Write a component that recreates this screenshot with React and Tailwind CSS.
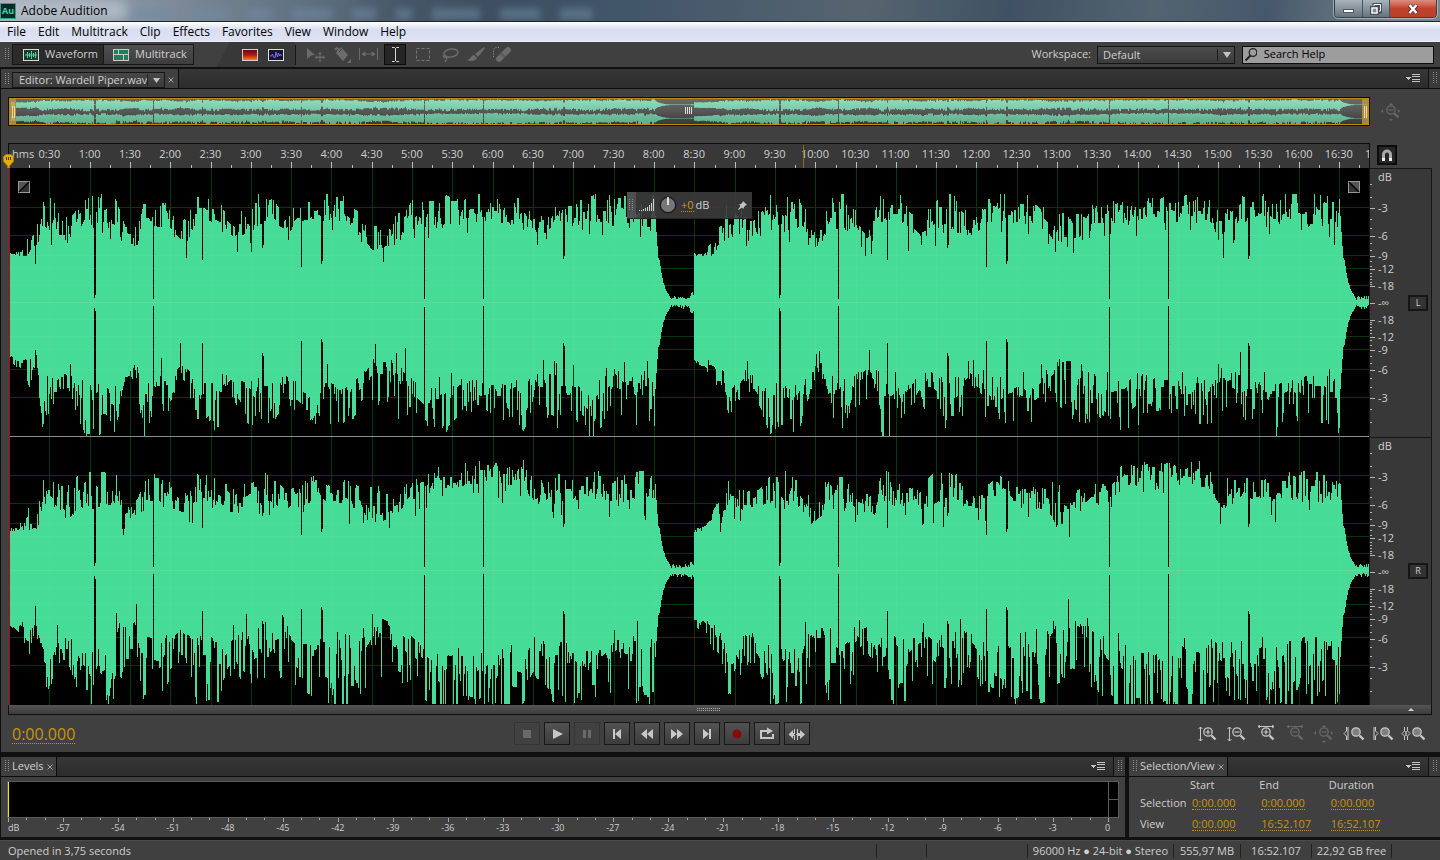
import React from 'react';

const SONG = 685;
const VIEW_W = 1360;
const VIEW_H = 537;
const SECONDS = 1012.107;
const STEP = (30 / SECONDS) * 100;

// x, then [low, high] peaks for: left up, left down, right up, right down
const ENVELOPE = [
  [0, 46, 49, 54, 58, 38, 41, 50, 54],
  [10, 46, 51, 58, 66, 40, 45, 52, 62],
  [20, 48, 68, 62, 84, 42, 66, 58, 80],
  [28, 52, 78, 66, 84, 44, 68, 62, 90],
  [33, 78, 98, 98, 125, 66, 88, 88, 130],
  [40, 68, 104, 88, 108, 68, 90, 94, 114],
  [50, 62, 85, 74, 88, 58, 82, 70, 96],
  [60, 62, 86, 76, 94, 54, 82, 72, 96],
  [68, 70, 96, 90, 110, 64, 90, 84, 120],
  [76, 84, 105, 92, 136, 66, 102, 94, 136],
  [95, 76, 106, 88, 130, 64, 100, 88, 134],
  [104, 78, 106, 94, 130, 68, 98, 88, 134],
  [111, 68, 92, 80, 108, 56, 88, 64, 118],
  [116, 50, 78, 62, 84, 46, 76, 60, 86],
  [128, 54, 72, 64, 82, 56, 78, 58, 88],
  [134, 80, 102, 90, 132, 70, 94, 80, 132],
  [150, 74, 106, 82, 118, 72, 96, 82, 130],
  [160, 72, 90, 80, 104, 64, 86, 70, 106],
  [172, 60, 80, 68, 94, 60, 76, 62, 92],
  [180, 64, 86, 76, 104, 58, 80, 66, 96],
  [186, 82, 104, 94, 136, 70, 98, 82, 136],
  [200, 84, 104, 86, 124, 72, 92, 78, 128],
  [212, 78, 104, 88, 118, 64, 88, 80, 124],
  [225, 66, 84, 74, 96, 60, 78, 68, 96],
  [235, 68, 94, 78, 114, 60, 90, 70, 110],
  [245, 74, 106, 86, 124, 66, 98, 82, 126],
  [260, 72, 104, 86, 124, 66, 94, 78, 120],
  [275, 68, 86, 74, 100, 62, 80, 68, 108],
  [290, 78, 100, 86, 110, 64, 82, 80, 116],
  [305, 84, 106, 92, 118, 72, 94, 82, 122],
  [320, 80, 104, 86, 118, 70, 86, 76, 130],
  [335, 78, 104, 92, 118, 68, 92, 74, 128],
  [350, 68, 92, 80, 110, 62, 82, 80, 126],
  [362, 52, 84, 64, 98, 48, 84, 58, 120],
  [378, 60, 88, 68, 112, 52, 76, 60, 104],
  [392, 58, 86, 72, 116, 58, 82, 66, 112],
  [402, 82, 104, 82, 108, 66, 90, 74, 116],
  [414, 78, 102, 94, 118, 70, 90, 86, 136],
  [430, 76, 104, 92, 132, 86, 108, 98, 150],
  [450, 86, 104, 78, 112, 84, 106, 96, 150],
  [470, 86, 107, 84, 108, 86, 110, 92, 150],
  [500, 80, 104, 86, 116, 86, 109, 86, 136],
  [514, 80, 100, 92, 124, 86, 108, 92, 138],
  [524, 70, 90, 78, 104, 66, 90, 76, 116],
  [536, 64, 92, 76, 112, 66, 88, 82, 122],
  [548, 84, 104, 84, 122, 70, 94, 84, 136],
  [565, 80, 106, 86, 112, 72, 92, 82, 126],
  [580, 82, 104, 94, 136, 72, 96, 88, 136],
  [600, 80, 106, 80, 112, 72, 96, 80, 126],
  [620, 78, 106, 84, 124, 70, 96, 80, 132],
  [644, 78, 104, 84, 126, 72, 96, 80, 130],
];

// x, width, remaining peak (upwards, downwards)
const DROPS = [
  [85, 2, 4, 5],
  [144, 1, 3, 3],
  [193, 1, 42, 40],
  [253, 2, 54, 50],
  [292, 1, 35, 38],
  [312, 2, 38, 36],
  [415, 1, 3, 4],
  [474, 1, 3, 3],
  [554, 2, 43, 40],
];

const noise = (seed) => {
  let s = seed;
  return () => {
    s = (s * 1664525 + 1013904223) % 4294967296;
    return s / 4294967296;
  };
};

const peakAt = (x, col, r) => {
  let i = 0;
  while (i < ENVELOPE.length - 2 && ENVELOPE[i + 1][0] <= x) i++;
  const a = ENVELOPE[i];
  const b = ENVELOPE[i + 1];
  const t = Math.min(1, (x - a[0]) / (b[0] - a[0]));
  const lo = a[col] + (b[col] - a[col]) * t;
  const hi = a[col + 1] + (b[col + 1] - a[col + 1]) * t;
  return lo + (hi - lo) * r;
};

const tail = (x, r) => {
  const fade = [86, 70, 56, 44, 42, 36, 29, 24, 19, 17, 13, 11, 9, 8, 6, 4];
  const i = x - 646;
  if (i < fade.length) return fade[i];
  return x > 680 ? 4 + r * 6 : 2 + r * 4;
};

const sidePeaks = (col, seed, limit) => {
  const rand = noise(seed);
  const up = col === 1 || col === 5;
  const out = [];
  let held = 0;
  for (let px = 0; px < VIEW_W; px++) {
    const x = px % SONG;
    const r = rand();
    const kind = rand();
    // mostly a flat body, with single tall columns standing out of it
    if (kind > 0.3) held = kind > 0.72 ? 0.5 + r * 0.65 : r * 0.65 - (up ? 0.15 : 0.3);
    const drop = DROPS.find((d) => x >= d[0] && x < d[0] + d[1]);
    let v = x >= 646 ? tail(x, r) : peakAt(x, col, held);
    if (x > 20 && x < 646 && rand() < 0.1) v -= 6 + rand() * 18;
    if (drop) v = (up ? drop[2] : drop[3]) + (x - drop[0]) * 3;
    out.push(Math.round(Math.min(v, limit)));
  }
  return out;
};

const channelPath = (center, up, down) => {
  let d = `M0 ${center}`;
  up.forEach((v, x) => { d += `V${center - v}H${x + 1}`; });
  for (let x = VIEW_W - 1; x >= 0; x--) d += `V${center + 1 + down[x]}H${x}`;
  return d + 'Z';
};

const LEFT_PATH = channelPath(134, sidePeaks(1, 7, 108), sidePeaks(3, 91, 133));
const RIGHT_PATH = channelPath(402, sidePeaks(5, 23, 110), sidePeaks(7, 57, 133));

const H_LINES = [-95, -67, -47, -34, -17, 17, 34, 47, 67, 95];
const V_LINES = Array.from({ length: 33 }, (_, i) => Math.round(((i + 1) * 30 * VIEW_W) / SECONDS));

const clock = (n) => `${Math.floor(n / 2)}:${n % 2 ? '30' : '00'}`;

const DB_SCALE = [
  ['dB', 31], ['-3', 28], ['-6', 20], ['-9', 13], ['-12', 17], ['-18', 17], ['-∞', 17],
  ['-18', 17], ['-12', 13], ['-9', 20], ['-6', 28], ['-3', 45],
];
const MINOR_TICKS = [15, 28, 50, 59, 74, 81, 92, 97, 104, 107, 110, 113, 115];

const Grip = ({ className = '' }) => (
  <svg className={`shrink-0 ${className}`} width="5" height="13" shapeRendering="crispEdges" aria-hidden="true">
    {[0, 2, 4, 6, 8, 10].map((y) => (
      <g key={y} fill="#8c8c8c">
        <rect x="0" y={y} width="1" height="1" />
        <rect x="3" y={y} width="1" height="1" />
      </g>
    ))}
  </svg>
);

const CloseTab = ({ label }) => (
  <button aria-label={`Close ${label}`} className="flex h-4 w-3 items-center justify-center text-[#a5a5a5]">
    <svg width="6" height="6" stroke="currentColor" strokeWidth="1"><path d="M0.5 0.5l5 5M5.5 0.5l-5 5" /></svg>
  </button>
);

const PanelEnd = () => (
  <div className="ml-auto flex items-center">
    <button aria-label="Panel menu" className="mr-[6px] flex h-4 w-4 items-center">
      <svg width="15" height="9" fill="#c4c4c4" shapeRendering="crispEdges">
        <path d="M0 3h5L2.5 6z" />
        <path d="M6 0h8v1H6zM6 2h8v1H6zM6 5h8v1H6zM6 7h8v1H6z" />
      </svg>
    </button>
    <div className="flex h-[19px] w-3 items-center justify-center border-l border-[#111] bg-[#3a3a3a]"><Grip className="ml-px" /></div>
  </div>
);

const Strip = ({ children }) => (
  <div className="flex h-5 shrink-0 items-stretch border-b border-[#0c0c0c] bg-linear-to-b from-[#373737] to-[#2c2c2c]">{children}<PanelEnd /></div>
);

const WinButton = ({ label, className, children }) => (
  <button aria-label={label} className={`flex items-center justify-center ${className}`}>{children}</button>
);

const TitleBar = () => (
  <header className="relative flex h-[22px] shrink-0 items-start overflow-hidden border-b border-[#1c232b] bg-linear-to-r from-[#a4b0bb] via-[#4b5c6d] via-28% to-[#6d7983]">
    <div className="absolute inset-0 bg-linear-[100deg,transparent_24%,#3d4f60_34%,#42566a_44%,#56646f_60%,#3f5263_70%,#536370_80%,#45586b_88%,#7a848c_97%]" />
    <div className="absolute top-2 left-32 flex gap-5 blur-[3px]">
      {['w-11', 'w-9', 'w-6', 'w-10', 'w-6', 'w-4', 'w-12', 'w-10', 'w-8'].map((w, i) => (
        <span key={i} className={`h-3 bg-[#6f8ba5]/50 ${w}`} />
      ))}
    </div>
    <div className="absolute top-0 left-0 h-5 w-32 rounded-full bg-[#b9c2ca]/80 blur-[6px]" />
    <div className="relative mt-1 ml-px flex h-[14px] w-[14px] items-center justify-center bg-[#062a26] text-[9px] font-bold text-[#36d6b0] outline outline-[#2ba58c]">Au</div>
    <h1 className="relative ml-[6px] pt-[3px] text-[12px] leading-4 text-black">Adobe Audition</h1>
    <div className="relative mr-[3px] ml-auto flex h-[18px] overflow-hidden rounded-b-[4px] border border-t-0 border-[#333e49] outline outline-white/40">
      <WinButton label="Minimize" className="w-7 border-r border-[#46525e] bg-linear-to-b from-[#a9b3bb] to-[#66747f]">
        <span className="mt-1 h-1 w-[11px] border border-[#555] bg-white" />
      </WinButton>
      <WinButton label="Restore" className="w-[27px] border-r border-[#46525e] bg-linear-to-b from-[#a9b3bb] to-[#66747f]">
        <svg width="12" height="12" fill="none"><path d="M4 4V1.5h6.5V9H9" stroke="#444f59" strokeWidth="3" /><path d="M4 3V1.5h6.5V8H9" stroke="#fff" /><rect x="1.5" y="4.5" width="6" height="6" stroke="#444f59" strokeWidth="3" /><rect x="2" y="5" width="5" height="5" stroke="#fff" strokeWidth="1.5" /></svg>
      </WinButton>
      <WinButton label="Close" className="w-[46px] bg-linear-to-b from-[#d98d7e] via-[#c3412b] to-[#b5412b]">
        <svg width="12" height="10"><path d="M2 1l8 8M10 1L2 9" stroke="#55302c" strokeWidth="4" /><path d="M2.500 1l7 8M9.500 1l-7 8" stroke="#fff" strokeWidth="2.500" /></svg>
      </WinButton>
    </div>
  </header>
);

const MENUS = ['File', 'Edit', 'Multitrack', 'Clip', 'Effects', 'Favorites', 'View', 'Window', 'Help'];

const MenuBar = () => (
  <nav className="flex h-5 shrink-0 items-center gap-3 border-b border-[#f0f0f8] bg-linear-to-b from-white via-[#d8def0] via-40% to-[#dfe3f4] px-[7px] text-[12px] leading-4 text-black">
    {MENUS.map((m) => <button key={m}>{m}</button>)}
  </nav>
);

const TOOLS = [
  ['Move', 'w-[26px]', <svg width="19" height="14" fill="#6b6b6b"><path d="M0 0l8 7-4 .5L0 11z" /><path d="M13 4l2 2h-1.500v2.500H16V7l2 2.500-2 2V10h-2.500v2.500H15L13 14l-2-1.500h1.500V10H10v1.500L8 9.500 10 7v1.500h2.500V6H11z" /></svg>],
  ['Razor', 'w-[26px]', <svg width="19" height="18" fill="#6b6b6b"><path d="M4 1l3 2 1-2 7 8-5 6-7-8 1-2-3-2z" /><path d="M6 6l3-3M5 3l-3 3" stroke="#404040" /><path d="M18 13v4h-4z" /></svg>],
  ['Slip', 'w-[26px]', <svg width="19" height="13" stroke="#6b6b6b" fill="#6b6b6b"><path d="M.5 0v12M18.500 0v12M3 6h13" /><path d="M3 6l3-2v4zM16 6l-3-2v4z" /></svg>],
  ['Time selection', 'w-[28px]', null],
  ['Marquee', 'w-[28px]', <svg width="15" height="13" fill="none" stroke="#777"><rect x=".5" y=".5" width="13" height="12" strokeDasharray="3 2" /></svg>],
  ['Lasso', 'w-[26px]', <svg width="18" height="14" fill="none" stroke="#6b6b6b" strokeWidth="1.500"><ellipse cx="10" cy="5" rx="7" ry="4" transform="rotate(-8 10 5)" /><path d="M4 7c-3 1-1 3 1 2s0 3-1 5" /></svg>],
  ['Brush', 'w-[26px]', <svg width="18" height="15" fill="#6b6b6b"><path d="M17 0L8 7l3 3 7-9z" /><path d="M7 8c-3 0-3 4-7 5 4 2 9 1 10-2z" /></svg>],
  ['Healing', 'w-[26px]', <svg width="20" height="17"><path d="M7 13L16 4" stroke="#6b6b6b" strokeWidth="6" strokeLinecap="round" /><path d="M9 8l4 3" stroke="#505050" strokeDasharray="1 1" strokeWidth="3" /><path d="M7 1.500H4C1.500 2 1.500 4 1.500 7v5" fill="none" stroke="#999" strokeDasharray="1 1.500" /></svg>],
];

const Toolbar = () => (
  <div className="flex h-[27px] shrink-0 items-center border-b-2 border-[#101010] bg-[#404040] pr-[6px] pl-[5px] text-[11px]">
    <Grip />
    <div className="ml-[2px] flex h-[21px] w-[182px] border border-[#161616]">
      <button className="flex flex-1 items-center gap-[6px] border-r border-[#161616] bg-[#2b2b2b] pl-[10px]">
        <svg width="16" height="12" fill="none" stroke="#d8d8d8"><rect x=".5" y=".5" width="15" height="11" fill="#203a30" /><path d="M2 6h12M4.500 3v6M6.500 4v4M8.500 2v8M10.500 4v4M12.500 3v6" stroke="#4ed39b" /></svg>
        Waveform
      </button>
      <button className="flex flex-1 items-center gap-[6px] bg-linear-to-b from-[#505050] to-[#3d3d3d] pl-[9px]">
        <svg width="16" height="12"><rect width="16" height="12" fill="#c9c9c9" /><path d="M1 1h4v4H1zM6 1h9v4H6zM1 6h9v5H1zM11 6h4v5h-4z" fill="#1f7f58" /></svg>
        Multitrack
      </button>
    </div>
    <div className="h-full w-[48px] bg-linear-[118deg,#404040_58%,#383838_59%]" />
    <div className="flex h-full items-center gap-[10px] bg-[#383838] pr-[11px]">
      <button aria-label="Spectral frequency display">
        <svg width="16" height="12"><defs><linearGradient id="heat" x2="0" y2="1"><stop offset="0" stopColor="#5a0a14" /><stop offset=".5" stopColor="#b81616" /><stop offset="1" stopColor="#ff8a1c" /></linearGradient></defs><rect x=".5" y=".5" width="15" height="11" fill="url(#heat)" stroke="#dcc" /></svg>
      </button>
      <button aria-label="Spectral pitch display">
        <svg width="16" height="12" fill="none"><rect x=".5" y=".5" width="15" height="11" fill="#14142c" stroke="#ddd" /><path d="M2 7h1.500l1-2 1 3 1.500 1 1-6 1.500 5 1-4 1 3 1-2 1 2" stroke="#7a72ff" /></svg>
      </button>
    </div>
    <div className="h-5 w-2 border-l border-[#161616]" />
    {TOOLS.map(([name, w, icon]) => (
      <div key={name} className={`flex justify-center ${w}`}>
        {icon ? <button aria-label={name}>{icon}</button> : (
          <button aria-label={name} className="flex h-[21px] w-[22px] items-center justify-center border border-[#0c0c0c] bg-[#262626]">
            <svg width="9" height="15" fill="none" stroke="#d5d5d5"><path d="M1 .5h2.500l1 1 1-1H8M4.500 1v13M1 14.500h2.500l1-1 1 1H8" /></svg>
          </button>
        )}
      </div>
    ))}
    <label htmlFor="workspace" className="ml-auto">Workspace:</label>
    <div className="relative ml-[6px]">
      <select id="workspace" className="block h-[18px] w-[138px] appearance-none border border-[#141414] bg-linear-to-b from-[#4c4c4c] to-[#3c3c3c] pl-[5px] text-[11px] leading-4">
        <option>Default</option>
      </select>
      <span className="pointer-events-none absolute top-[3px] right-0 flex h-3 w-[18px] items-center justify-center border-l border-[#1c1c1c]">
        <svg width="8" height="6" fill="#c4c4c4"><path d="M0 0h8L4 6z" /></svg>
      </span>
    </div>
    <label className="ml-[7px] flex h-[18px] w-[192px] items-center border border-[#0c0c0c] bg-[#9d9d9d] pl-[2px]">
      <svg width="13" height="13" fill="none" stroke="#222" strokeWidth="1.300"><circle cx="8" cy="4.500" r="3.800" /><path d="M5.500 7.500L.5 12.500" strokeWidth="2" /></svg>
      <input aria-label="Search Help" placeholder="Search Help" className="ml-[7px] w-full bg-transparent text-[11px] text-black outline-none placeholder:text-black" />
    </label>
  </div>
);

const Overview = () => (
  <div className="flex h-[29px] shrink-0">
    <div className="relative min-w-0 flex-1 border border-[#0c0c0c]">
      <svg className="block h-full w-full bg-linear-to-b from-[#6c6c6c] via-[#565656] to-[#363636]" viewBox={`0 0 ${VIEW_W} ${VIEW_H}`} preserveAspectRatio="none">
        <defs><linearGradient id="mini" gradientUnits="userSpaceOnUse" x1="0" x2="0" y1="0" y2={VIEW_H}><stop offset="0" stopColor="#92e0bf" /><stop offset="1" stopColor="#5bab8a" /></linearGradient></defs>
        <path d={LEFT_PATH + RIGHT_PATH} fill="url(#mini)" />
      </svg>
      <div className="absolute inset-0 flex items-center justify-between border border-[#c08a12]">
        {[0, 1].map((i) => (
          <span key={i} className="flex h-full w-[6px] items-center justify-center gap-px border border-[#c08a12] bg-[#b8a466]/70">
            <i className="h-3 w-px bg-[#e8dcae]" /><i className="h-3 w-px bg-[#e8dcae]" />
          </span>
        ))}
      </div>
      <svg className="absolute top-[9px] left-1/2 -ml-1" width="8" height="8" fill="#ddd" shapeRendering="crispEdges"><path d="M0 0h1v7H0zM2 0h1v7H2zM4 0h1v7H4zM6 0h1v7H6z" /></svg>
    </div>
    <div className="flex w-[62px] items-center pl-[11px]"><ZoomIcon kind="full" dim /></div>
  </div>
);

const Lens = ({ x = 0, sign }) => (
  <g transform={`translate(${x} 0)`}>
    <circle cx="6" cy="7" r="4.200" fill={sign ? 'none' : '#808080'} stroke="currentColor" strokeWidth="1.300" />
    <path d="M9.500 10.500l4 4" stroke="currentColor" strokeWidth="2.400" />
    {sign && <path d={sign === '+' ? 'M3.500 7h5M6 4.500v5' : 'M3.500 7h5'} stroke="currentColor" strokeWidth="1.200" />}
  </g>
);

const ZoomIcon = ({ kind, dim }) => (
  <svg width="24" height="18" fill="none" className={dim ? 'text-[#686868]' : 'text-[#c6c6c6]'}>
    {(kind === 'v+' || kind === 'v-') && <><path d="M2.500 2v14M.5 4l2-2 2 2M.5 14l2 2 2-2" stroke="currentColor" /><Lens x={4} sign={kind[1]} /></>}
    {(kind === 'h+' || kind === 'h-') && <><path d="M2 1.500h16M4 0L2 1.500 4 3M16 0l2 1.500L16 3" stroke="currentColor" /><Lens x={4} sign={kind[1]} /></>}
    {kind === 'full' && <><Lens x={4} sign="-" /><path d="M8 2l2-2 2 2zM8 16l2 2 2-2zM2 6L0 8l2 2zM17 6l2 2-2 2z" fill="currentColor" /></>}
    {kind === 'in' && <><path d="M3.500 2v4L1 8.500 3.500 11v4" stroke="currentColor" /><path d="M4 2h2v13H4z" fill="#888" /><Lens x={7} /></>}
    {kind === 'out' && <><path d="M1 2h2v13H1z" fill="#888" /><path d="M3.500 2v4l2.500 2.500L3.500 11v4" stroke="currentColor" /><Lens x={7} /></>}
    {kind === 'sel' && <><path d="M3.500 2v4L1 8.500 3.500 11v4M6.500 2v4L9 8.500 6.500 11v4" stroke="currentColor" /><path d="M4 6h2v5H4z" fill="#999" /><Lens x={10} /></>}
  </svg>
);

const Ruler = () => (
  <div className="flex h-[25px] shrink-0">
    <div className="relative min-w-0 flex-1">
      <div className="flex h-full flex-col overflow-hidden border border-b-0 border-[#0c0c0c] bg-[#383838]">
        <div className="flex pt-[2px] text-[11px] leading-4 whitespace-nowrap">
          <span className="shrink-0 pl-[3px]" style={{ width: `${STEP / 2}%` }}>hms</span>
          {Array.from({ length: 34 }, (_, i) => (
            <span key={i} className="shrink-0 text-center" style={{ width: `${STEP}%` }}>{clock(i + 1)}</span>
          ))}
        </div>
        <svg className="mt-auto block h-[7px] w-full overflow-visible" viewBox={`0 0 ${VIEW_W} 7`} preserveAspectRatio="none" fill="#bdbdbd" shapeRendering="crispEdges">
          {V_LINES.map((x) => <path key={x} d={`M${x} 0h1v7h-1zM${x - 20} 3h1v4h-1z`} />)}
          <rect x="1350" y="3" width="1" height="4" />
          <rect x="794" y="-17" width="1" height="24" fill="#8a6a1c" />
        </svg>
      </div>
      <svg className="absolute bottom-0 -left-[5px] z-10" width="12" height="14"><path d="M.5 2.500L3 .5h5l2.500 2v5L6.500 12v2h-2v-2L.5 7.500z" fill="#e6ad0c" stroke="#a87a08" /><path d="M3.500 3v3M5.500 3v3M7.500 3v3" stroke="#4a3708" /></svg>
    </div>
    <div className="w-[62px] pt-[2px] pl-[7px]">
      <button aria-label="Toggle snapping" className="flex h-5 w-5 items-center justify-center border-2 border-[#0c0c0c] bg-[#262626]">
        <svg width="12" height="12" fill="none"><path d="M2.500 11V5.500a3.500 3.500 0 017 0V11" stroke="#a8a8a8" strokeWidth="3" /><path d="M1 9h3v3H1zM8 9h3v3H8z" fill="#f0f0f0" /></svg>
      </button>
    </div>
  </div>
);

const Channel = ({ name }) => (
  <div className="flex min-h-0 flex-1 border-t border-[#161616] bg-[#383838]">
    <svg className="block h-full w-2" viewBox="0 0 8 268" preserveAspectRatio="none" fill="#b5b5b5" shapeRendering="crispEdges">
      {[0, ...H_LINES].map((y) => <rect key={y} y={y + 134} width="5" height="1" />)}
      {MINOR_TICKS.map((y) => <path key={y} d={`M0 ${y}h2v1H0zM0 ${268 - y}h2v1H0z`} />)}
    </svg>
    <div className="flex w-[28px] flex-col pt-px text-[11px] leading-[14px]">
      {DB_SCALE.map(([label, grow], i) => (
        <span key={i} className="min-h-0 basis-0" style={{ flexGrow: grow }}>{label}</span>
      ))}
    </div>
    <button aria-label={`Channel ${name}`} className="ml-[2px] h-4 w-5 self-center border-2 border-[#161616] bg-[#333] text-[9px] leading-3">{name}</button>
  </div>
);

const Hud = () => (
  <div className="absolute top-6 left-[618px] flex h-[27px] w-[125px] items-center border-b border-[#262626] bg-[#3c3c3c]/90 text-[11px]">
    <div className="flex h-full w-[9px] items-center justify-center bg-[#555]/80"><Grip /></div>
    <svg className="ml-[3px]" width="16" height="14" fill="#d0d0d0" shapeRendering="crispEdges"><path d="M0 12h1v1H0zM2 12h1v1H2zM4 11h1v2H4zM6 10h1v3H6zM8 9h1v4H8zM10 7h1v6h-1zM12 5h1v8h-1zM14 1h1v12h-1z" /></svg>
    <svg className="ml-1" width="18" height="18"><circle cx="9" cy="9" r="8.500" fill="#1e1e1e" /><circle cx="9" cy="9" r="7" fill="#777" /><path d="M9 1v8" stroke="#fff" strokeWidth="1.500" /></svg>
    <button className="ml-1 border-b border-dotted border-[#c9940f] leading-[13px] text-[#d19a10]">+0</button>
    <span className="ml-[2px]">dB</span>
    <button aria-label="Pin" className="mr-[5px] ml-auto"><svg width="9" height="9" fill="#c4c4c4"><path d="M5 0l4 4-1.500.5L6 6l-.5 2L4 6.500.5 9 0 8.500 2.500 5 1 3.500 3 3l1.500-1.500z" /></svg></button>
  </div>
);

const FadeHandle = ({ side }) => (
  <svg className={`absolute top-[13px] ${side === 'in' ? 'left-[9px]' : 'right-[9px]'}`} width="12" height="12">
    <rect x=".5" y=".5" width="11" height="11" fill="#555" stroke="#999" />
    <path d={side === 'in' ? 'M1 11L11 1v10z' : 'M1 1l10 10H1z'} fill="#333" />
    <path d={side === 'in' ? 'M1 11L11 1' : 'M1 1l10 10'} stroke="#000" strokeWidth="1.500" />
  </svg>
);

const Waveform = () => (
  <div className="flex min-h-0 flex-1">
    <div className="relative ml-px min-w-0 flex-1 bg-black">
      <svg className="block h-full w-full" viewBox={`0 0 ${VIEW_W} ${VIEW_H}`} preserveAspectRatio="none" shapeRendering="crispEdges">
        <g fill="#003000">
          {V_LINES.map((x) => <rect key={x} x={x} width="1" height={VIEW_H} />)}
          {[134, 402].map((c) => H_LINES.map((y) => <rect key={c + y} y={c + y} width={VIEW_W} height="1" />))}
        </g>
        <path d={LEFT_PATH} fill="#46dc98" />
        <path d={RIGHT_PATH} fill="#46dc98" />
        <g fill="#fff" opacity=".03">
          {V_LINES.map((x) => <rect key={x} x={x} width="1" height={VIEW_H} />)}
          {[134, 402].map((c) => H_LINES.map((y) => <rect key={c + y} y={c + y} width={VIEW_W} height="1" />))}
        </g>
        <path d={`M0 134h${VIEW_W}v1H0zM0 402h${VIEW_W}v1H0z`} fill="#60dc98" />
        <rect y="268" width={VIEW_W} height="1" fill="#8c8c8c" />
        <rect width="1" height={VIEW_H} fill="#b00c0c" />
      </svg>
      <FadeHandle side="in" />
      <FadeHandle side="out" />
      <Hud />
    </div>
    <div className="flex w-[63px] flex-col border-x border-[#161616]">
      <Channel name="L" />
      <Channel name="R" />
    </div>
  </div>
);

const TRANSPORT = [
  ['Stop', 'M9 6h8v8H9z', true],
  ['Play', 'M9 5l10 5-10 5z'],
  ['Pause', 'M9 6h3v8H9zM14 6h3v8h-3z', true],
  ['Go to previous', 'M9 5h2v10H9zM17 5v10l-6-5z'],
  ['Rewind', 'M13 5v10l-6-5zM19 5v10l-6-5z'],
  ['Fast forward', 'M7 5l6 5-6 5zM13 5l6 5-6 5z'],
  ['Go to next', 'M9 5l6 5-6 5zM15 5h2v10h-2z'],
  ['Record', 'M13 5.500a4.500 4.500 0 100 9 4.500 4.500 0 000-9z'],
  ['Loop', 'M6 6h5v2H8v5h10v-3h2v5H6zM13 3.500l6 3.500-6 3.500V8h-3V6h3z'],
  ['Skip selection', 'M5 10l4-4v3h1V5h1v5h-1v1h1v5h-1v-4H9v3l-3-3.500H5zM13 5h1v4h2V6l5 4.500-5 4.500v-3h-2v4h-1v-5h-1v-1h1z'],
];

const Transport = () => (
  <div className="flex h-[37px] shrink-0 items-center pr-[15px] pl-[11px]">
    <button className="mt-[3px] border-b border-dotted border-[#c9940f] text-[16px] leading-[17px] text-[#c9940f]">0:00.000</button>
    <div className="grow-[17]" />
    <div className="flex gap-1">
      {TRANSPORT.map(([name, d, off]) => (
        <button key={name} aria-label={name} disabled={off} className={`flex h-[23px] w-[26px] items-center justify-center border ${off ? 'border-[#353535] bg-[#414141]' : 'border-[#181818] bg-linear-to-b from-[#535353] to-[#3c3c3c]'}`}>
          <svg width="26" height="20" className="shrink-0"><path d={d} fill={name === 'Record' ? '#8a0a0a' : off ? '#696969' : '#c8c8c8'} /></svg>
        </button>
      ))}
    </div>
    <div className="grow-[15]" />
    <div className="flex gap-[5px]">
      {['v+', 'v-', 'h+', 'h-', 'full', 'in', 'out', 'sel'].map((kind) => (
        <button key={kind} aria-label={`Zoom ${kind}`}><ZoomIcon kind={kind} dim={kind === 'h-' || kind === 'full'} /></button>
      ))}
    </div>
  </div>
);

const Editor = () => (
  <section className="flex min-h-0 flex-1 flex-col border-l border-[#101010] bg-[#404040]">
    <Strip>
      <div className="flex items-end border-r border-[#0c0c0c] bg-[#404040] pr-px pl-1">
        <Grip className="mb-[2px]" />
        <button className="ml-[2px] flex h-4 w-[153px] items-center border border-[#161616] bg-linear-to-b from-[#484848] to-[#3a3a3a] pl-[6px] text-[11px] leading-3 whitespace-nowrap">
          Editor: Wardell Piper.wav
          <span className="ml-auto flex h-3 w-[17px] items-center justify-center border-l border-[#222]"><svg width="7" height="5" fill="#c4c4c4"><path d="M0 0h7L3.500 5z" /></svg></span>
        </button>
        <CloseTab label="editor" />
      </div>
    </Strip>
    <div className="flex min-h-0 flex-1 flex-col pt-2 pr-2 pl-[7px]">
      <Overview />
      <div className="h-[17px] shrink-0" />
      <Ruler />
      <Waveform />
      <div className="flex h-[10px] shrink-0 items-center justify-center border border-t-0 border-[#101010] bg-linear-to-b from-[#555] to-[#3c3c3c]">
        <svg className="ml-auto" width="24" height="4" fill="#a8a8a8" shapeRendering="crispEdges">
          {Array.from({ length: 12 }, (_, i) => <path key={i} d={`M${i * 2} 0h1v1h-1zM${i * 2} 2h1v1h-1z`} />)}
        </svg>
        <svg className="mr-[17px] ml-auto" width="6" height="3" fill="#d0d0d0"><path d="M3 0l3 3H0z" /></svg>
      </div>
    </div>
    <Transport />
  </section>
);

const METER_STEP = 54.95 / 11.1;

const Levels = () => (
  <section className="flex min-w-0 flex-1 flex-col border-l border-[#101010] bg-[#404040]">
    <Strip>
      <div className="flex items-center border-r border-[#0c0c0c] bg-[#404040] pl-1 text-[11px]">
        <Grip />
        <span className="ml-[2px]">Levels</span>
        <CloseTab label="levels" />
      </div>
    </Strip>
    <div className="flex flex-1 flex-col pt-[4px] pr-[6px] pl-[6px]">
      <div className="flex h-[37px] shrink-0 justify-between border border-[#5c5c5c] bg-black">
        <div className="h-full w-px bg-[#f2e600]" />
        <div className="flex w-[10px] flex-col border-l border-[#5c5c5c]">
          <div className="flex-1 border-b border-[#5c5c5c]" />
          <div className="flex-1" />
        </div>
      </div>
      <div className="pl-px">
        <svg className="block h-1 w-full" viewBox="0 0 1110 4" preserveAspectRatio="none" fill="#a8a8a8" shapeRendering="crispEdges">
          {Array.from({ length: 61 }, (_, i) => <rect key={i} x={Math.round((i * 54.95) / 3)} y="0" width="1" height={i % 3 ? 2 : 4} />)}
        </svg>
        <div className="flex overflow-hidden text-[9px] leading-3 whitespace-nowrap">
          <span className="shrink-0" style={{ width: `${METER_STEP / 2}%` }}>dB</span>
          {Array.from({ length: 20 }, (_, i) => (
            <span key={i} className="shrink-0 text-center" style={{ width: `${METER_STEP}%` }}>{-57 + i * 3}</span>
          ))}
        </div>
      </div>
    </div>
  </section>
);

const TIMES = [
  ['Selection', '0:00.000', '0:00.000', '0:00.000'],
  ['View', '0:00.000', '16:52.107', '16:52.107'],
];

const SelectionView = () => (
  <section className="flex w-[311px] flex-col bg-[#404040]">
    <Strip>
      <div className="flex items-center border-r border-[#0c0c0c] bg-[#404040] pl-1 text-[11px]">
        <Grip />
        <span className="ml-[2px]">Selection/View</span>
        <CloseTab label="selection" />
      </div>
    </Strip>
    <table className="ml-[11px] w-[258px] table-fixed text-left text-[11px]">
      <thead>
        <tr className="h-[15px] leading-[15px]">
          <td className="w-[50px]" />
          {['Start', 'End', 'Duration'].map((h) => <th key={h} scope="col" className="font-normal">{h}</th>)}
        </tr>
      </thead>
      <tbody>
        {TIMES.map(([name, ...values]) => (
          <tr key={name} className="h-[21px] leading-[17px]">
            <th scope="row" className="font-normal">{name}</th>
            {values.map((v, i) => (
              <td key={i} className="pl-[2px]"><button className="block border-b border-dotted border-[#c9940f] leading-[13px] text-[#c9940f]">{v}</button></td>
            ))}
          </tr>
        ))}
      </tbody>
    </table>
  </section>
);

const STATUS = [
  ['', 'w-[50px]'],
  ['', 'w-[101px]'],
  ['96000 Hz ● 24-bit ● Stereo', 'w-[146px]'],
  ['555,97 MB', 'w-[67px]'],
  ['16:52.107', 'w-[71px]'],
  ['22,92 GB free', 'w-[80px]'],
  ['', 'w-[49px]'],
];

export default function App() {
  return (
    <div className="flex h-screen min-h-[640px] min-w-[1100px] flex-col overflow-hidden bg-[#101010] font-['Open_Sans','Noto_Sans',sans-serif] text-[#cfcfcf]">
      <TitleBar />
      <MenuBar />
      <Toolbar />
      <Editor />
      <div className="mt-[5px] flex h-20 shrink-0 gap-1">
        <Levels />
        <SelectionView />
      </div>
      <footer className="mt-[3px] flex h-5 shrink-0 items-center border-t border-[#4c4c4c] bg-[#404040] pl-2 text-[11px] leading-4 whitespace-nowrap">
        <span className="mr-auto">Opened in 3,75 seconds</span>
        {STATUS.map(([text, w], i) => (
          <span key={i} className={`h-[14px] border-l border-[#202020] text-center leading-[14px] ${w}`}>{text}</span>
        ))}
      </footer>
    </div>
  );
}
